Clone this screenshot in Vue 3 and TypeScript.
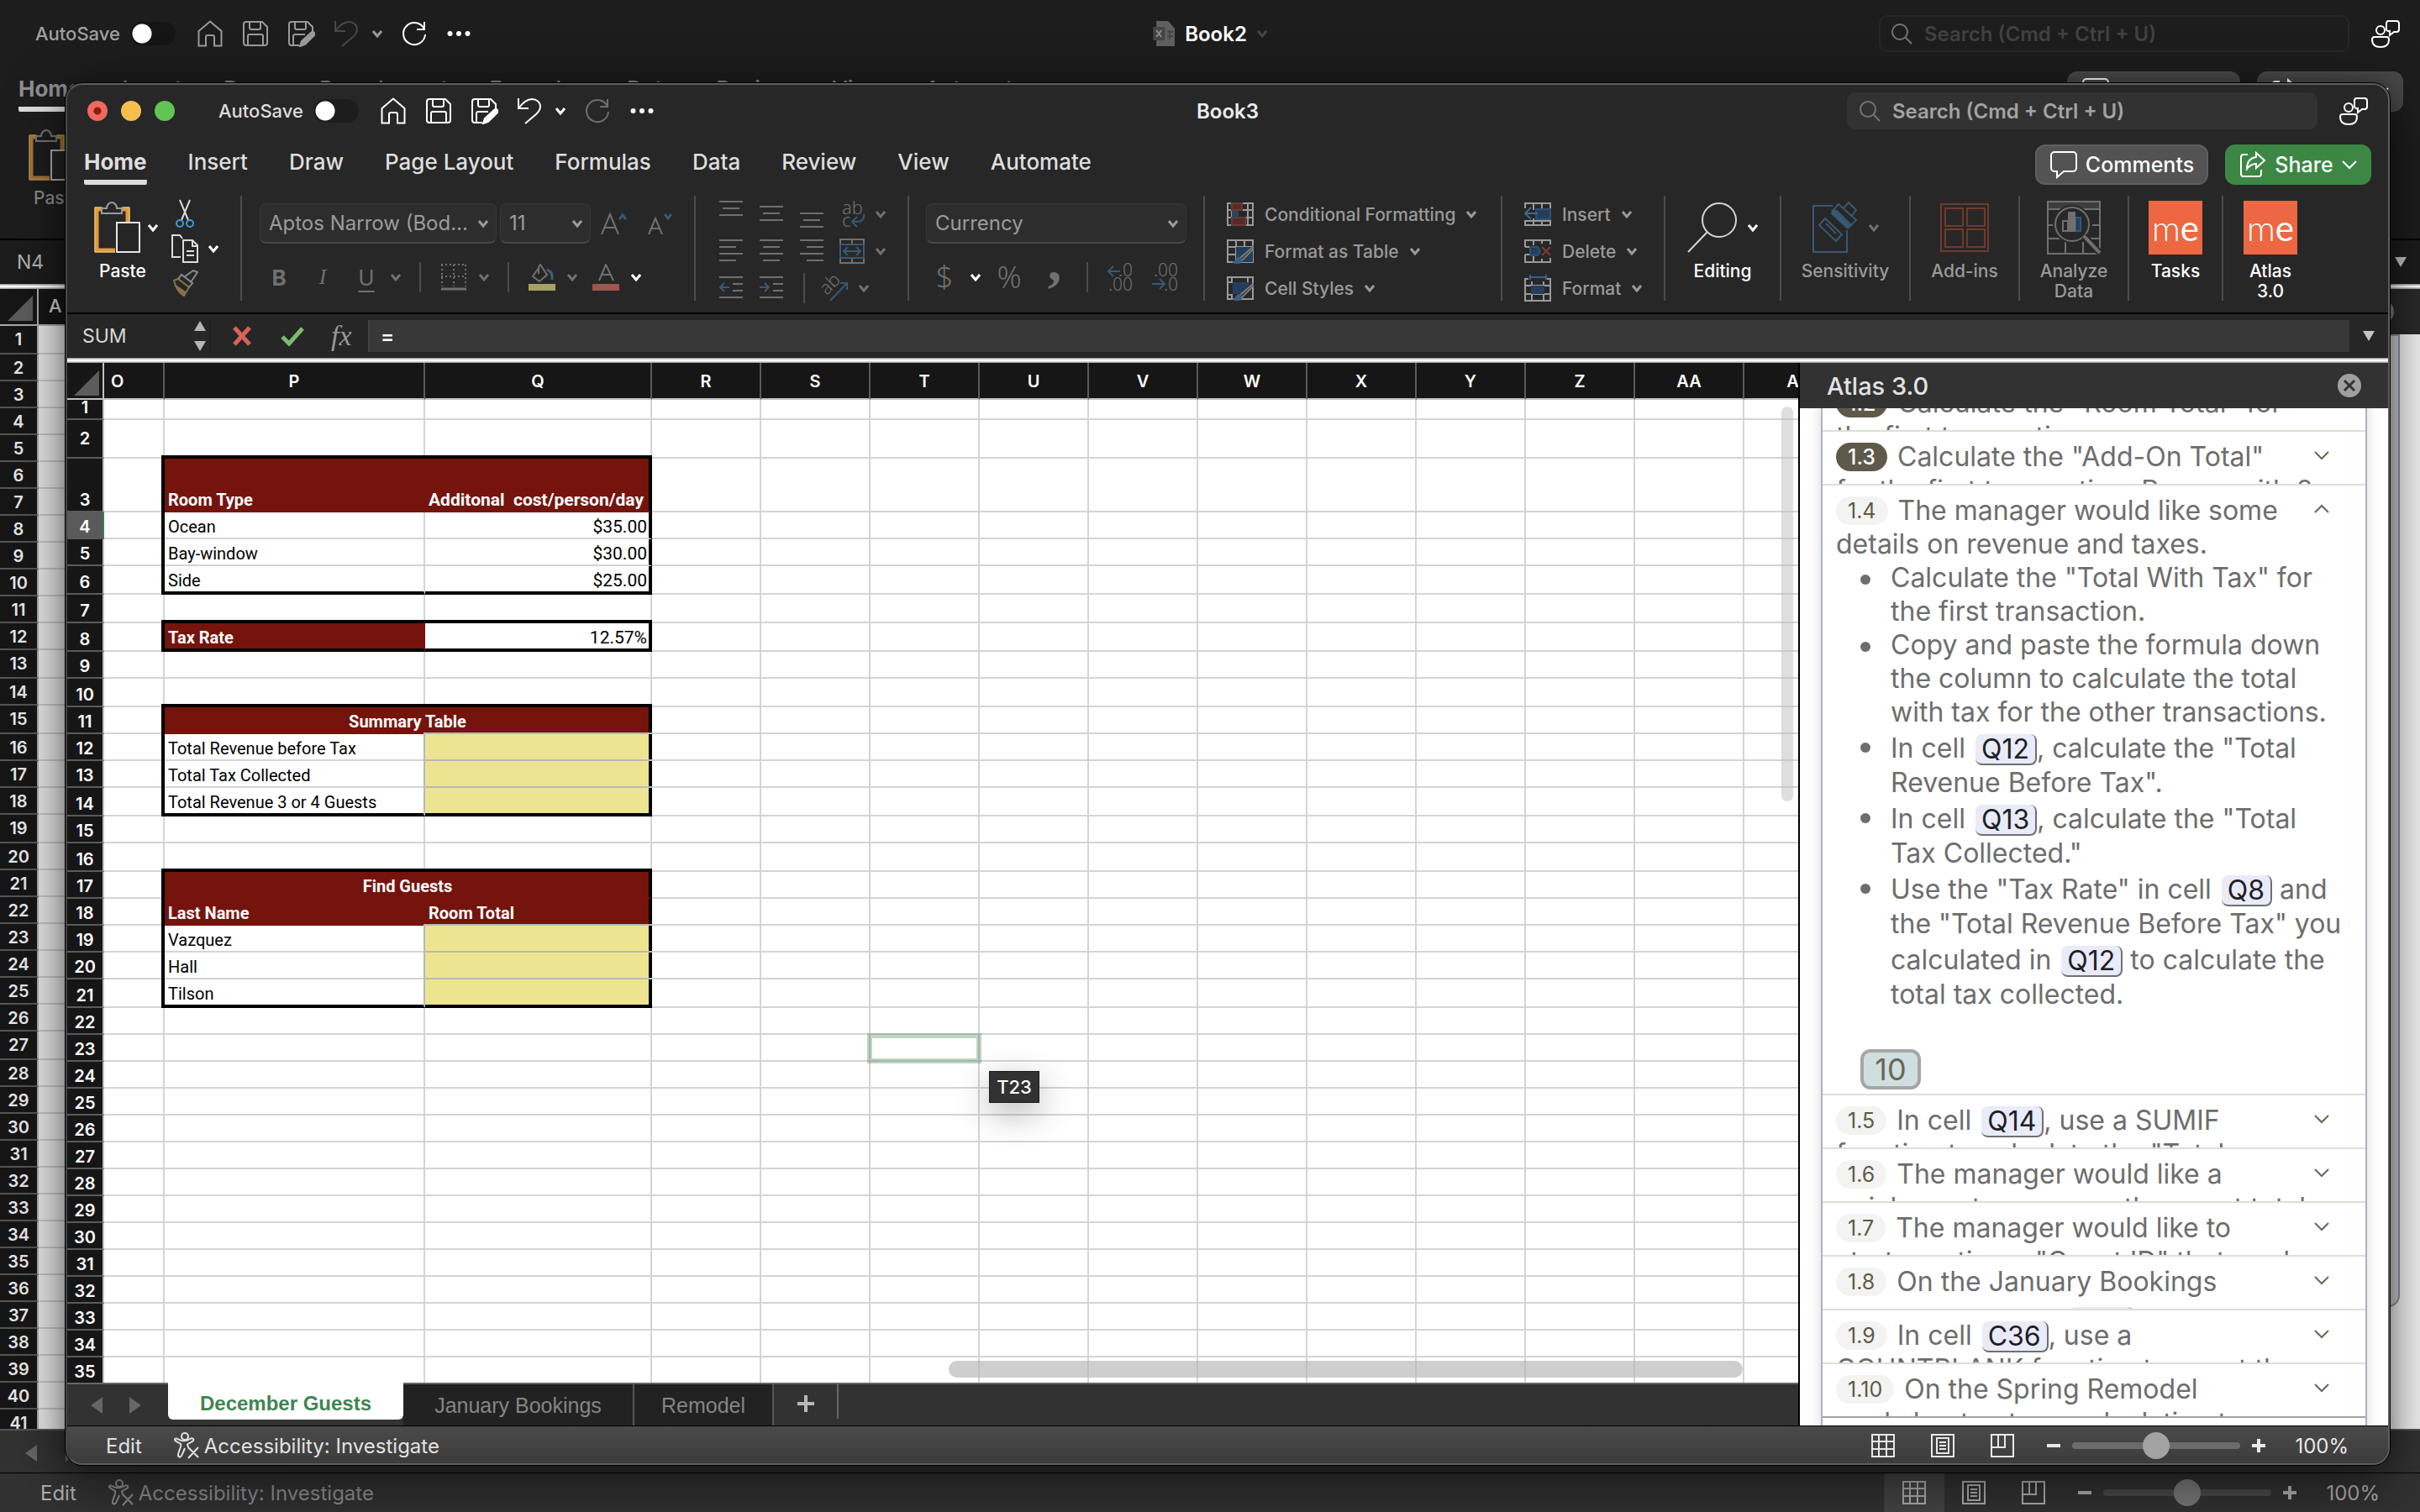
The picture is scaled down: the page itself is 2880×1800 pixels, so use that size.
<script setup lang="ts">
import { ref } from 'vue'

interface Cell {
  text?: string
  cls?: string
  span?: number
  tip?: string
}
interface Row {
  n: number
  h: number
  cells: Cell[]
}
interface Task {
  id: string
  done?: boolean
  open?: boolean
  lines: string[]
  bullets?: string[][]
  points?: string
}

const ribbonTabs = ['Home', 'Insert', 'Draw', 'Page Layout', 'Formulas', 'Data', 'Review', 'View', 'Automate']
const columns = ['O', 'P', 'Q', 'R', 'S', 'T', 'U', 'V', 'W', 'X', 'Y', 'Z', 'AA', 'AB']
const colClass = (c: string) => (c === 'O' ? 'c-o' : c === 'P' ? 'c-p' : c === 'Q' ? 'c-q' : 'c-n')

const filled: Record<number, Cell[]> = {
  3: [
    { text: 'Room Type', cls: 'head top left' },
    { text: 'Additonal  cost/person/day', cls: 'head top edge num' },
  ],
  4: [{ text: 'Ocean', cls: 'left' }, { text: '$35.00', cls: 'edge num' }],
  5: [{ text: 'Bay-window', cls: 'left' }, { text: '$30.00', cls: 'edge num' }],
  6: [{ text: 'Side', cls: 'left end' }, { text: '$25.00', cls: 'edge num end' }],
  8: [
    { text: 'Tax Rate', cls: 'head top left end' },
    { text: '12.57%', cls: 'top edge num end' },
  ],
  11: [{ text: 'Summary Table', cls: 'head top left edge mid', span: 2 }],
  12: [{ text: 'Total Revenue before Tax', cls: 'left' }, { cls: 'edge fill' }],
  13: [{ text: 'Total Tax Collected', cls: 'left' }, { cls: 'edge fill' }],
  14: [{ text: 'Total Revenue 3 or 4 Guests', cls: 'left end' }, { cls: 'edge fill end' }],
  17: [{ text: 'Find Guests', cls: 'head top left edge mid', span: 2 }],
  18: [{ text: 'Last Name', cls: 'head left' }, { text: 'Room Total', cls: 'head edge' }],
  19: [{ text: 'Vazquez', cls: 'left' }, { cls: 'edge fill' }],
  20: [{ text: 'Hall', cls: 'left' }, { cls: 'edge fill' }],
  21: [{ text: 'Tilson', cls: 'left end' }, { cls: 'edge fill end' }],
}
const tall: Record<number, number> = { 1: 34, 2: 46, 3: 64, 6: 34, 7: 34, 8: 34, 10: 34, 14: 34, 16: 34, 21: 34 }

const rows: Row[] = Array.from({ length: 35 }, (_, i) => {
  const n = i + 1
  const rest: Cell[] = columns.slice(3).map((c) => (n === 23 && c === 'T' ? { tip: 'T23', cls: 'target' } : {}))
  return { n, h: tall[n] ?? 32, cells: [{}, ...(filled[n] ?? [{}, {}]), ...rest] }
})
const backRows = Array.from({ length: 41 }, (_, i) => {
  const n = i + 1
  return { n, h: [1, 13, 15, 19, 27].includes(n) ? 34 : 32 }
})

const tasks: Task[] = [
  { id: '1.2', done: true, lines: ['Calculate the "Room Total" for', 'the first transaction.'] },
  { id: '1.3', done: true, lines: ['Calculate the "Add-On Total"', 'for the first transaction. Rooms with 2'] },
  {
    id: '1.4',
    open: true,
    lines: ['The manager would like some', 'details on revenue and taxes.'],
    bullets: [
      ['Calculate the "Total With Tax" for', 'the first transaction.'],
      ['Copy and paste the formula down', 'the column to calculate the total', 'with tax for the other transactions.'],
      ['In cell [Q12], calculate the "Total', 'Revenue Before Tax".'],
      ['In cell [Q13], calculate the "Total', 'Tax Collected."'],
      [
        'Use the "Tax Rate" in cell [Q8] and',
        'the "Total Revenue Before Tax" you',
        'calculated in [Q12] to calculate the',
        'total tax collected.',
      ],
    ],
    points: '10',
  },
  { id: '1.5', lines: ['In cell [Q14], use a SUMIF', 'function to calculate the "Total'] },
  { id: '1.6', lines: ['The manager would like a', 'quick way to compare the guest total'] },
  { id: '1.7', lines: ['The manager would like to', 'start creating a "Guest ID" that reads'] },
  { id: '1.8', lines: ['On the January Bookings', 'worksheet, in cell [C35], use a'] },
  { id: '1.9', lines: ['In cell [C36], use a', 'COUNTBLANK function to count the'] },
  { id: '1.10', lines: ['On the Spring Remodel', 'worksheet enter a calculation to'] },
]
const parts = (line: string) => line.split(/(\[[^\]]+\])/).filter((s) => s)
const isRef = (s: string) => s.startsWith('[')
const bare = (s: string) => s.replace(/[[\]]/g, '')

const formula = ref('=')
const cellName = ref('SUM')
const backName = ref('N4')
const zoom = ref(50)
</script>

<template>
  <svg class="sprite" aria-hidden="true">
    <symbol id="home" viewBox="0 0 30 32"><path d="M1.500 13 15 1.500 28.500 13V30.500H20V20a2 2 0 0 0-2-2h-6a2 2 0 0 0-2 2v10.500H1.500z" /></symbol>
    <symbol id="save" viewBox="0 0 30 32"><path d="M4 2h19l6 6v19a3 3 0 0 1-3 3H4a3 3 0 0 1-3-3V5a3 3 0 0 1 3-3zM8 2v7a2 2 0 0 0 2 2h9a2 2 0 0 0 2-2V2M6 30V19a2 2 0 0 1 2-2h14a2 2 0 0 1 2 2v11" /></symbol>
    <symbol id="save-edit" viewBox="0 0 32 32"><path d="M13 30H4a3 3 0 0 1-3-3V5a3 3 0 0 1 3-3h19l6 6v5M8 2v7a2 2 0 0 0 2 2h9a2 2 0 0 0 2-2V2M6 30V19a2 2 0 0 1 2-2h12" /><path d="M14 31l2-6 11-10a2 2 0 0 1 4 3L20 29z" fill="currentColor" /></symbol>
    <symbol id="undo" viewBox="0 0 30 32"><path d="M2 1v12h12M2 13C8 5 13 2 18 2c6 0 10 4 10 9 0 4-2 6-5 9L10 31" /></symbol>
    <symbol id="redo" viewBox="0 0 30 32"><path d="M27 2v9h-9M27 11A13 13 0 1 0 28 17" /></symbol>
    <symbol id="dots" viewBox="0 0 28 8"><g fill="currentColor" stroke="none"><circle cx="3.500" cy="4" r="3" /><circle cx="14" cy="4" r="3" /><circle cx="24.500" cy="4" r="3" /></g></symbol>
    <symbol id="chev" viewBox="0 0 12 10"><path d="M1 2l5 6 5-6" stroke-width="3" /></symbol>
    <symbol id="chev-thin" viewBox="0 0 18 12"><path d="M1 2l8 8 8-8" /></symbol>
    <symbol id="glass" viewBox="0 0 26 26"><circle cx="11" cy="11" r="9" /><path d="M18 18l7 7" /></symbol>
    <symbol id="people" viewBox="0 0 34 34"><path d="M20 2h10a3 3 0 0 1 3 3v7a3 3 0 0 1-3 3h-3l-5 4v-5a3 3 0 0 1-4-2V5a3 3 0 0 1 2-3z" /><circle cx="11" cy="13" r="5" /><path d="M4 21h14a3 3 0 0 1 3 3c0 6-4 9-10 9S1 30 1 24a3 3 0 0 1 3-3z" /></symbol>
    <symbol id="paste" viewBox="0 0 56 62">
      <path d="M9 9H3v49h22M34 9h6v18" stroke="#e09a3e" stroke-width="5" /><path d="M10 7H1v53h24M33 7h9v20" stroke="#f5d48a" stroke-width="1" />
      <path d="M9 14V8h6c0-4 3-7 6-7s6 3 6 7h6v6z" stroke="#9a9a9a" /><path d="M27 25h27v35H27z" fill="#262626" stroke="#e6e6e6" />
    </symbol>
    <symbol id="cut" viewBox="0 0 24 34"><path d="M6 1l10 24M18 1L8 25" stroke="#dcdcdc" /><circle cx="6" cy="29" r="4" stroke="#4a95d8" /><circle cx="18" cy="29" r="4" stroke="#4a95d8" /></symbol>
    <symbol id="copy" viewBox="0 0 32 34"><path d="M11 27H1V1h9l3 4M14 7h11l6 6v20H14zM25 7v7h6M18 20h9M18 25h9" /></symbol>
    <symbol id="brush" viewBox="0 0 32 32"><path d="M3 13l5-2 13 10-6 10C9 28 5 21 3 13z" stroke="#857348" /><path d="M8 11l4-5 13 10-4 5M15 9L26 1l5 2-8 12" stroke="#8a8a8a" /><path d="M5 18l12 8-2 5c-5-2-8-6-10-13z" fill="#857348" stroke="none" /></symbol>
    <symbol id="a-up" viewBox="0 0 32 28"><path d="M1 27L11 3l10 24M5 19h12" /><path d="M22 9l4-5 4 5" stroke="#3a5872" stroke-width="3" /></symbol>
    <symbol id="a-down" viewBox="0 0 32 28"><path d="M1 27L9 8l8 19M4 20h10" /><path d="M20 3l4 5 4-5" stroke="#3a5872" stroke-width="3" /></symbol>
    <symbol id="borders" viewBox="0 0 32 32"><path d="M1 1h30M1 15h30M2 1v26M16 1v26M30 1v26" stroke-dasharray="2 3" /><path d="M1 30h30" stroke-width="3" /></symbol>
    <symbol id="bucket" viewBox="0 0 32 32"><path d="M12 5L5 15l8 6 9-8L14 1l-2 3v8" /><path d="M22 7c5 2 7 6 6 12" stroke="#3f5f7c" stroke-width="3" /><path d="M0 24h32v8H0z" fill="#a5a265" stroke="none" /></symbol>
    <symbol id="a-color" viewBox="0 0 32 32"><path d="M8 20L16 1l9 19M11 13h11" /><path d="M0 24h32v8H0z" fill="#9e5650" stroke="none" /></symbol>
    <symbol id="v-top" viewBox="0 0 28 32"><path d="M0 1h28M4 9h20M0 17h28" /></symbol>
    <symbol id="v-mid" viewBox="0 0 28 32"><path d="M0 7h28M4 15h20M0 23h28" /></symbol>
    <symbol id="v-bot" viewBox="0 0 28 32"><path d="M0 15h28M4 23h20M0 31h28" /></symbol>
    <symbol id="h-left" viewBox="0 0 28 32"><path d="M0 3h28M0 11h20M0 19h28M0 27h20" /></symbol>
    <symbol id="h-mid" viewBox="0 0 28 32"><path d="M0 3h28M4 11h20M0 19h28M4 27h20" /></symbol>
    <symbol id="h-right" viewBox="0 0 28 32"><path d="M0 3h28M8 11h20M0 19h28M8 27h20" /></symbol>
    <symbol id="outdent" viewBox="0 0 28 32"><path d="M0 3h28M16 11h12M16 19h12M0 27h28" /><path d="M12 15H2M6 10l-5 5 5 5" stroke="#3a5872" /></symbol>
    <symbol id="indent" viewBox="0 0 28 32"><path d="M0 3h28M16 11h12M16 19h12M0 27h28" /><path d="M0 15h10M6 10l5 5-5 5" stroke="#3a5872" /></symbol>
    <symbol id="merge" viewBox="0 0 32 32"><path d="M2 2h28v28H2zM16 2v5M16 25v5" /><path d="M2 8h28v16H2z" fill="#282828" stroke="#3a5872" /><path d="M6 16h20M11 11l-5 5 5 5M21 11l5 5-5 5" stroke="#3a5872" /></symbol>
    <symbol id="cond" viewBox="0 0 32 28"><path d="M1 1h30v26H1zM1 9h30M1 18h30M6 1v26M25 1v26" /><path d="M6 1h12v8H6zM6 18h16v9H6z" fill="#572b2a" stroke="#6e3734" /><path d="M6 10h8v8H6z" fill="#2b4560" stroke="none" /></symbol>
    <symbol id="fmt-table" viewBox="0 0 32 32"><path d="M1 3h30v26H1zM1 11h30M1 20h12M11 3v26M21 3v8" /><path d="M11 11h20v18H11z" fill="#233f5d" stroke="none" /><path d="M31 11L15 25l3 2L31 14z" fill="#282828" stroke="#7a7a7a" /><path d="M6 29c5 0 4-6 9-6 4 0 5 8-1 8-4 0-6 0-8-2z" fill="#3c6080" stroke="none" /></symbol>
    <symbol id="cell-styles" viewBox="0 0 32 32"><path d="M1 3h30v26H1zM1 9h6M6 3v6M1 24h6M6 24v5M25 3v6" /><path d="M7 9h22L18 22 7 24z" fill="#233f5d" stroke="none" /><path d="M31 11L15 25l3 2L31 14z" fill="#282828" stroke="#7a7a7a" /><path d="M6 29c5 0 4-6 9-6 4 0 5 8-1 8-4 0-6 0-8-2z" fill="#3c6080" stroke="none" /></symbol>
    <symbol id="ins" viewBox="0 0 32 28"><path d="M1 7V1h30v26H1v-6M11 1v8M21 1v8M11 19v8M21 19v8M1 22h30" /><path d="M14 8h17v12H14z" fill="#233f5d" stroke="#2f5070" /><path d="M16 13H2M8 6l-7 7 7 7" stroke="#3f6890" /></symbol>
    <symbol id="del" viewBox="0 0 32 28"><path d="M1 9V1h30v5M1 9h8M1 18h8M1 18v9h30v-5M11 1v6M11 20v7M21 1v4M21 23v4" /><path d="M7 9h9l3 5-3 5H7z" fill="#233f5d" stroke="#2f5070" /><path d="M21 9l10 10M31 9L21 19" stroke="#7d3a37" /></symbol>
    <symbol id="fmt" viewBox="0 0 32 32"><path d="M5 5H1v26h30V5h-4M1 13h30M1 23h30M9 8v23M23 8v23" /><path d="M8 13h16v10H8z" fill="#233f5d" stroke="none" /><path d="M7 3h19M7 0v6M26 0v6" stroke="#3a6288" /></symbol>
    <symbol id="find" viewBox="0 0 60 60"><circle cx="38" cy="21" r="20" /><path d="M24 35L1 59" /></symbol>
    <symbol id="sens" viewBox="0 0 56 62"><path d="M25 5H2v55h40V34" /><path d="M16 20l-7 8 20 19 7-8zM17 26l12 12" stroke-width="2" /><path d="M32 3l-7 8 20 19 8-8zM38 8l6-7 9 9-6 8M25 11l5 0 17 17-3 3z" /><path d="M26 10l18 18-2 3-18-17z" fill="currentColor" /></symbol>
    <symbol id="addins" viewBox="0 0 60 60"><path d="M2 2h56v56H2zM7 7h21v21H7zM33 7h21v21H33zM7 32h21v21H7zM33 32h21v21H33z" /></symbol>
    <symbol id="analyze" viewBox="0 0 64 64"><path d="M1 1h62v9H1z" fill="#3d3d3d" /><path d="M1 1h62v62H1zM1 29h8M54 29h9M1 45h15M52 45h11M22 49v14M43 49v14" /><circle cx="30" cy="28" r="23" fill="#282828" stroke="none" /><path d="M19 24h6v12h-6z" /><path d="M34 20h6v16h-6z" fill="#233f5d" stroke="#34587c" /><path d="M26 14h7v22h-7z" fill="currentColor" /><circle cx="30" cy="28" r="20" /><path d="M44 42l20 21" stroke="#282828" stroke-width="8" /><path d="M44 42l19 20" stroke-width="4" /></symbol>
    <symbol id="bubble" viewBox="0 0 34 34"><path d="M6 2h22a4 4 0 0 1 4 4v15a4 4 0 0 1-4 4H17l-8 7v-7H6a4 4 0 0 1-4-4V6a4 4 0 0 1 4-4z" /></symbol>
    <symbol id="share" viewBox="0 0 32 32"><path d="M10 4H5a3 3 0 0 0-3 3v20a3 3 0 0 0 3 3h18a3 3 0 0 0 3-3v-5" /><path d="M20 2l10 9-10 9v-5c-5 0-8 2-11 6 0-8 4-13 11-14z" /></symbol>
    <symbol id="x-mark" viewBox="0 0 24 24"><path d="M3 2l18 20M21 2L3 22" stroke-width="5" /></symbol>
    <symbol id="tick" viewBox="0 0 28 24"><path d="M2 13l8 8L26 3" stroke-width="5" /></symbol>
    <symbol id="access" viewBox="0 0 32 32"><circle cx="14" cy="5" r="4" /><path d="M2 8c2-2 4 1 8 2s7 0 10-2 5 0 4 2-7 3-7 5l2 5M2 8c-1 3 5 4 7 6s-4 11-3 14 4 1 5-2l3-7M19 19l11 11M30 18L18 31" /></symbol>
    <symbol id="v-grid" viewBox="0 0 28 28"><path d="M1 1h26v26H1zM1 9h26M1 18h26M9 1v26M18 1v26" /></symbol>
    <symbol id="v-page" viewBox="0 0 28 28"><path d="M1 1h26v26H1zM7 5h14v18H7zM10 10h8M10 14h8M10 18h8" /></symbol>
    <symbol id="v-break" viewBox="0 0 28 28"><path d="M1 1h26v26H1zM1 16h16V1M9 1v15" /></symbol>
    <symbol id="corner" viewBox="0 0 30 30"><path d="M30 0v30H0z" fill="#5c5c5c" stroke="none" /></symbol>
  </svg>

  <main class="desk">
    <section class="back" aria-label="Book2">
      <header class="bar">
        <div class="quick">
          <label class="auto">AutoSave <input type="checkbox" class="toggle" /></label>
          <svg class="i30"><use href="#home" /></svg><svg class="i30"><use href="#save" /></svg><svg class="i32"><use href="#save-edit" /></svg>
          <span class="pair"><svg class="i30 faint"><use href="#undo" /></svg><svg class="chev"><use href="#chev" /></svg></span>
          <svg class="i30 white"><use href="#redo" /></svg><svg class="dots white"><use href="#dots" /></svg>
        </div>
        <h1 class="doc"><svg class="file" viewBox="0 0 26 30"><path d="M4 0h14l8 9v21H4z" fill="#5f5f5f" stroke="none" /><path d="M0 7h14v16H0z" fill="#454545" stroke="none" /><path d="M4 11l6 8M10 11l-6 8" stroke="#8c8c8c" /><path d="M17 13h7M17 18h7M20 11v11" stroke="#454545" /></svg>Book2<svg class="chev faint"><use href="#chev" /></svg></h1>
        <div class="tools">
          <label class="search"><svg class="i26"><use href="#glass" /></svg><input type="text" placeholder="Search (Cmd + Ctrl + U)" aria-label="Search" /></label>
          <svg class="i34 white"><use href="#people" /></svg>
        </div>
      </header>
      <nav class="tabs">
        <div class="tablist"><button v-for="t in ribbonTabs" :key="t" :class="{ on: t === 'Home' }">{{ t }}</button></div>
        <div class="acts">
          <button class="btn grey"><svg class="i34"><use href="#bubble" /></svg>Comments</button>
          <button class="btn grey share-btn"><svg class="i32"><use href="#share" /></svg>Share<svg class="ct"><use href="#chev-thin" /></svg></button>
        </div>
      </nav>
      <div class="back-ribbon"><button class="big"><svg class="i-paste"><use href="#paste" /></svg><span>Paste</span></button></div>
      <div class="fbar"><input v-model="backName" class="namebox" aria-label="Cell name" /><span class="tri-down"></span></div>
      <div class="back-sheet">
        <div class="back-grid">
          <div class="back-head"><span class="cornercell"><svg><use href="#corner" /></svg></span><span class="a">A</span></div>
          <div v-for="r in backRows" :key="r.n" class="back-row" :style="{ height: r.h + 'px' }"><b>{{ r.n }}</b><i></i></div>
        </div>
        <div class="back-pane"><div class="pane-bar"><span class="pane-close"></span></div><div class="back-card"></div></div>
      </div>
      <div class="back-tabs"><span class="arr l"></span><span class="arr r"></span><span class="sheet-on"></span></div>
      <footer class="status">
        <span class="mode">Edit</span>
        <button class="acc"><svg class="i32"><use href="#access" /></svg>Accessibility: Investigate</button>
        <div class="views">
          <svg class="i28 sel"><use href="#v-grid" /></svg><svg class="i28"><use href="#v-page" /></svg><svg class="i28"><use href="#v-break" /></svg>
          <span class="zoomer"><i class="minus"></i><input type="range" min="0" max="100" value="50" aria-label="Zoom" /><i class="minus plus"></i></span><span>100%</span>
        </div>
      </footer>
    </section>

    <section class="win" aria-label="Book3">
      <header class="bar">
        <div class="lights"><i class="red"></i><i class="amber"></i><i class="green"></i></div>
        <div class="quick">
          <label class="auto">AutoSave <input type="checkbox" class="toggle" /></label>
          <svg class="i30"><use href="#home" /></svg><svg class="i30"><use href="#save" /></svg><svg class="i32"><use href="#save-edit" /></svg>
          <span class="pair"><svg class="i30"><use href="#undo" /></svg><svg class="chev"><use href="#chev" /></svg></span>
          <svg class="i30 faint"><use href="#redo" /></svg><svg class="dots"><use href="#dots" /></svg>
        </div>
        <h1 class="doc">Book3</h1>
        <div class="tools">
          <label class="search"><svg class="i26"><use href="#glass" /></svg><input type="text" placeholder="Search (Cmd + Ctrl + U)" aria-label="Search" /></label>
          <svg class="i34"><use href="#people" /></svg>
        </div>
      </header>
      <nav class="tabs">
        <div class="tablist"><button v-for="t in ribbonTabs" :key="t" :class="{ on: t === 'Home' }">{{ t }}</button></div>
        <div class="acts">
          <button class="btn grey"><svg class="i34"><use href="#bubble" /></svg>Comments</button>
          <button class="btn green-btn share-btn"><svg class="i32"><use href="#share" /></svg>Share<svg class="ct"><use href="#chev-thin" /></svg></button>
        </div>
      </nav>

      <div class="ribbon">
        <div class="grp g-clip">
          <button class="big"><span class="icrow"><svg class="i-paste"><use href="#paste" /></svg><svg class="chev"><use href="#chev" /></svg></span><span>Paste</span></button>
          <div class="stack">
            <button aria-label="Cut"><svg class="i-cut"><use href="#cut" /></svg></button>
            <button aria-label="Copy"><svg class="i-copy"><use href="#copy" /></svg><svg class="chev"><use href="#chev" /></svg></button>
            <button aria-label="Format Painter"><svg class="i32"><use href="#brush" /></svg></button>
          </div>
        </div>
        <div class="grp g-font dim">
          <div class="line sel-line">
            <span class="sel w-font"><select aria-label="Font"><option>Aptos Narrow (Bod...</option></select><svg class="chev"><use href="#chev" /></svg></span>
            <span class="sel w-size"><select aria-label="Font size"><option>11</option></select><svg class="chev"><use href="#chev" /></svg></span>
            <svg class="i-a"><use href="#a-up" /></svg><svg class="i-a second"><use href="#a-down" /></svg>
          </div>
          <div class="line fmt-line">
            <b class="glyph">B</b><i class="glyph it">I</i><u class="glyph">U</u><svg class="chev"><use href="#chev" /></svg>
            <span class="sep"></span><svg class="i32"><use href="#borders" /></svg><svg class="chev"><use href="#chev" /></svg><span class="sep"></span>
            <svg class="i32"><use href="#bucket" /></svg><svg class="chev wide"><use href="#chev" /></svg><svg class="i32"><use href="#a-color" /></svg><svg class="chev lit"><use href="#chev" /></svg>
          </div>
        </div>
        <div class="grp g-align dim">
          <div class="al"><svg class="i28w"><use href="#v-top" /></svg><svg class="i28w"><use href="#v-mid" /></svg><svg class="i28w"><use href="#v-bot" /></svg><span class="tail">
            <svg class="i32t ic" viewBox="0 0 32 34"><text x="4" y="17" font-size="22">ab</text><text x="4" y="32" font-size="22">c</text><path d="M30 17c1 6-3 9-8 9h-5M22 20l-6 6 6 6" stroke="#3a5872" /></svg><svg class="chev"><use href="#chev" /></svg></span></div>
          <div class="al"><svg class="i28w"><use href="#h-left" /></svg><svg class="i28w"><use href="#h-mid" /></svg><svg class="i28w"><use href="#h-right" /></svg><span class="tail"><svg class="i32"><use href="#merge" /></svg><svg class="chev"><use href="#chev" /></svg></span></div>
          <div class="al"><svg class="i28w"><use href="#outdent" /></svg><svg class="i28w"><use href="#indent" /></svg><span class="sep near"></span><span class="tail">
            <svg class="i34 ic" viewBox="0 0 34 34"><text x="8" y="26" font-size="22" transform="rotate(-45 8 26)">ab</text><path d="M12 32l20-21M24 11h8v8" stroke="#3a5872" /></svg><svg class="chev"><use href="#chev" /></svg></span></div>
        </div>
        <div class="grp g-num dim">
          <div class="line sel-line"><span class="sel w-num"><select aria-label="Number format"><option>Currency</option></select><svg class="chev"><use href="#chev" /></svg></span></div>
          <div class="line num-line"><span class="sym">$</span><svg class="chev lit"><use href="#chev" /></svg><span class="sym pct">%</span><span class="sym comma">,</span><span class="sep"></span>
            <svg class="i32t ic" viewBox="0 0 32 34"><path d="M2 10h14M8 4l-6 6 6 6" stroke="#3a5872" /><text x="31" y="16" font-size="21" text-anchor="end">.0</text><text x="31" y="33" font-size="21" text-anchor="end">.00</text></svg>
            <svg class="i32t ic" viewBox="0 0 32 34"><path d="M0 25h15M9 19l6 6-6 6" stroke="#3a5872" /><text x="31" y="16" font-size="21" text-anchor="end">.00</text><text x="31" y="33" font-size="21" text-anchor="end">.0</text></svg></div>
        </div>
        <div class="grp g-style dim">
          <button class="item"><svg class="i32"><use href="#cond" /></svg>Conditional Formatting<svg class="chev"><use href="#chev" /></svg></button>
          <button class="item"><svg class="i32"><use href="#fmt-table" /></svg>Format as Table<svg class="chev"><use href="#chev" /></svg></button>
          <button class="item"><svg class="i32"><use href="#cell-styles" /></svg>Cell Styles<svg class="chev"><use href="#chev" /></svg></button>
        </div>
        <div class="grp g-cells dim">
          <button class="item"><svg class="i32"><use href="#ins" /></svg>Insert<svg class="chev"><use href="#chev" /></svg></button>
          <button class="item"><svg class="i32"><use href="#del" /></svg>Delete<svg class="chev"><use href="#chev" /></svg></button>
          <button class="item"><svg class="i32"><use href="#fmt" /></svg>Format<svg class="chev"><use href="#chev" /></svg></button>
        </div>
        <div class="grp g-edit"><button class="big"><span class="icrow"><svg class="i60 soft"><use href="#find" /></svg><svg class="chev"><use href="#chev" /></svg></span><span>Editing</span></button></div>
        <div class="grp g-sens dim"><button class="big"><span class="icrow"><svg class="i-sens"><use href="#sens" /></svg><svg class="chev"><use href="#chev" /></svg></span><span>Sensitivity</span></button></div>
        <div class="grp g-add dim"><button class="big"><span class="icrow"><svg class="i60 rust"><use href="#addins" /></svg></span><span>Add-ins</span></button></div>
        <div class="grp g-add dim"><button class="big"><span class="icrow"><svg class="i64"><use href="#analyze" /></svg></span><span>Analyze<br />Data</span></button></div>
        <div class="grp g-me"><button class="big"><span class="icrow me"><em>m</em>e</span><span>Tasks</span></button></div>
        <div class="grp g-me last"><button class="big"><span class="icrow me"><em>m</em>e</span><span>Atlas<br />3.0</span></button></div>
      </div>

      <div class="fbar">
        <input v-model="cellName" class="namebox" aria-label="Cell name" /><span class="spin"><i class="up"></i><i class="down"></i></span>
        <button class="fb x" aria-label="Cancel"><svg class="i24"><use href="#x-mark" /></svg></button>
        <button class="fb ok" aria-label="Enter"><svg class="i28t"><use href="#tick" /></svg></button>
        <span class="fx">fx</span>
        <input v-model="formula" class="formula" aria-label="Formula" /><span class="tri-down"></span>
      </div>

      <div class="work">
        <div class="left-col">
          <div class="clip">
            <table class="heads">
              <thead><tr><th class="c-h"><svg><use href="#corner" /></svg></th><th v-for="c in columns" :key="c" :class="colClass(c)">{{ c }}</th></tr></thead>
            </table>
            <div class="cells">
              <table>
                <colgroup><col class="c-h" /><col v-for="c in columns" :key="c" :class="colClass(c)" /></colgroup>
                <tbody>
                  <tr v-for="r in rows" :key="r.n" :style="{ height: r.h + 'px' }">
                    <th :class="{ cur: r.n === 4, mid: r.n === 2 }">{{ r.n }}</th>
                    <td v-for="(c, i) in r.cells" :key="i" :class="c.cls" :colspan="c.span ?? 1">{{ c.text }}<template v-if="c.tip"><span class="outline"></span><span class="tip">{{ c.tip }}</span></template></td>
                  </tr>
                </tbody>
              </table>
            </div>
            <span class="vscroll"></span><span class="hscroll"></span>
          </div>
          <div class="sheets">
            <div class="arrows"><span class="arr l"></span><span class="arr r"></span></div>
            <button class="on">December Guests</button>
            <button class="jan">January Bookings</button>
            <button class="rem">Remodel</button>
            <button class="add" aria-label="New sheet"><i class="minus plus"></i></button>
          </div>
        </div>
        <aside class="panel">
          <header><h2>Atlas 3.0</h2><button class="close" aria-label="Close"><svg viewBox="0 0 28 28"><path d="M8 8l12 12M20 8L8 20" stroke-width="3" /></svg></button></header>
          <div class="scroll">
            <div class="card">
              <article v-for="t in tasks" :key="t.id" :class="{ open: t.open }">
                <svg class="toggle-chev" :class="{ flip: t.open }"><use href="#chev-thin" /></svg>
                <p v-for="(l, i) in t.lines" :key="i" :class="{ low: i > 0 && l.includes('[') }"><span v-if="i === 0" class="pill" :class="{ done: t.done }">{{ t.id }}</span><template v-for="(s, j) in parts(l)" :key="j"><kbd v-if="isRef(s)">{{ bare(s) }}</kbd><template v-else>{{ s }}</template></template></p>
                <ul v-if="t.bullets">
                  <li v-for="(b, k) in t.bullets" :key="k"><p v-for="(l, i) in b" :key="i" :class="{ ref: l.includes('[') }"><template v-for="(s, j) in parts(l)" :key="j"><kbd v-if="isRef(s)">{{ bare(s) }}</kbd><template v-else>{{ s }}</template></template></p></li>
                </ul>
                <span v-if="t.points" class="points">{{ t.points }}</span>
              </article>
            </div>
          </div>
        </aside>
      </div>

      <footer class="status">
        <span class="mode">Edit</span>
        <button class="acc"><svg class="i32"><use href="#access" /></svg>Accessibility: Investigate</button>
        <div class="views">
          <svg class="i28"><use href="#v-grid" /></svg><svg class="i28"><use href="#v-page" /></svg><svg class="i28"><use href="#v-break" /></svg>
          <span class="zoomer"><i class="minus"></i><input v-model="zoom" type="range" min="0" max="100" aria-label="Zoom" /><i class="minus plus"></i></span><span>100%</span>
        </div>
      </footer>
    </section>
  </main>
</template>

<style>
body { margin: 0; background: #1b1b1b; }
</style>

<style scoped>
* { box-sizing: border-box; }
.sprite { position: absolute; width: 0; height: 0; }
svg { display: block; flex: none; fill: none; stroke: currentColor; stroke-width: 2; }
.ic text { font-family: "Noto Sans", sans-serif; font-weight: 300; fill: #707070; stroke: none; }
button, input, select { font: inherit; color: inherit; background: none; border: 0; padding: 0; margin: 0; }
h1, h2, p, ul { margin: 0; padding: 0; }
.desk { position: relative; height: 100vh; min-height: 1000px; overflow: hidden; font-family: Inter, "Noto Sans", sans-serif; font-size: 22px; color: #fff; }
.i24 { width: 24px; height: 24px; }
.i26 { width: 26px; height: 26px; }
.i28 { width: 28px; height: 28px; }
.i28t { width: 28px; height: 24px; }
.i28w { width: 28px; height: 32px; }
.i30 { width: 30px; height: 32px; }
.i32 { width: 32px; height: 32px; }
.i32t { width: 32px; height: 34px; }
.i34 { width: 34px; height: 34px; }
.i60 { width: 60px; height: 60px; }
.i64 { width: 64px; height: 64px; }
.chev { width: 12px; height: 10px; }
.ct { width: 18px; height: 12px; }
.dots { width: 28px; height: 8px; }

/* Windows */
.win { position: absolute; inset: 99px 36px 56px 78px; display: flex; flex-direction: column; background: #272727; border: 2px solid #5e5e5e; border-left-color: #454545; border-radius: 20px; box-shadow: 0 0 0 1px #000, 0 24px 70px rgba(0, 0, 0, .5), 0 0 24px rgba(0, 0, 0, .3); overflow: hidden; }
.back { display: flex; flex-direction: column; height: 100%; background: #1d1d1d; color: #9a9a9a; }

/* Title bar */
.bar { display: grid; grid-template-columns: auto 1fr auto; align-items: center; height: 62px; position: relative; flex: none; }
.win .bar { padding: 0 24px; grid-template-columns: auto auto 1fr; }
.back .bar { height: 80px; padding: 0 24px 0 42px; }
.lights { display: flex; gap: 16px; }
.lights i { width: 24px; height: 24px; border-radius: 50%; }
.red { background: radial-gradient(circle, #8c1a10 0 4px, #ed6a5e 5px); }
.amber { background: #f5bf4f; }
.green { background: #61c554; }
.quick { display: flex; align-items: center; gap: 24px; }
.win .quick { margin-left: 52px; }
.auto { display: flex; align-items: center; gap: 12px; font-weight: 500; color: #dcdcdc; margin-right: 2px; }
.back .auto { color: #a0a0a0; }
.toggle { appearance: none; width: 54px; height: 28px; border-radius: 14px; background: radial-gradient(circle at 14px 14px, #fff 11px, transparent 12px), #1d1d1d; }
.back .toggle { background: radial-gradient(circle at 14px 14px, #fff 11px, transparent 12px), #151515; }
.pair { display: flex; align-items: center; gap: 16px; margin: 0 -1px 0 -2px; }
.faint { color: #6f6f6f; }
.back .faint { color: #484848; }
.white { color: #fff; }
.doc { position: absolute; left: 50%; transform: translateX(-50%); display: flex; align-items: center; gap: 12px; font-size: 24px; font-weight: 600; color: #fff; }
.win .doc { color: #ececec; }
.file { width: 26px; height: 30px; stroke-width: 2; }
.tools { grid-column: 3; display: flex; align-items: center; gap: 26px; justify-self: end; }
.search { width: 560px; height: 44px; border-radius: 10px; background: #323232; display: flex; align-items: center; gap: 14px; padding: 0 14px; color: #757575; }
.back .search { background: none; border: 2px solid #272727; padding: 0 12px; }
.search input { flex: 1; outline: 0; font-size: 24px; font-weight: 600; }
.search input::placeholder { color: #a3a3a3; opacity: 1; }
.back .search input::placeholder { color: #414141; }

/* Ribbon tabs */
.tabs { display: flex; justify-content: space-between; align-items: center; height: 60px; padding: 0 20px; flex: none; }
.back .tabs { padding: 0 20px 0 22px; height: 52px; }
.tablist { display: flex; gap: 49px; }
.tabs .tablist button { height: 54px; font-size: 26px; font-weight: 500; color: #dedede; border-bottom: 6px solid transparent; padding-top: 4px; white-space: nowrap; }
.tabs .tablist .on { font-weight: 700; background: linear-gradient(#dedede, #dedede) bottom / 100% 6px no-repeat border-box; border-radius: 2px; }
.back .tabs .tablist button { color: #8f8f8f; }
.acts { display: flex; gap: 20px; margin-top: 6px; }
.btn { width: 206px; height: 48px; border-radius: 12px; display: flex; align-items: center; justify-content: center; gap: 9px; font-size: 25px; font-weight: 500; color: #fff; }
.share-btn { width: 174px; gap: 10px; }
.grey { background: #535353; border: 2px solid #5f5f5f; }
.green-btn { background: #3c8744; }
.back .grey { background: #484848; border-color: #4a4a4a; }

/* Ribbon */
.ribbon { display: flex; height: 151px; padding: 10px 0 16px; border-bottom: 2px solid #000; flex: none; }
.grp { position: relative; border-right: 2px solid #4c4c4c; flex: none; height: 125px; }
.grp.last { border: 0; }
.dim { color: #707070; }
.g-clip { width: 208px; display: flex; padding-left: 32px; }
.g-font { width: 540px; padding-left: 21px; }
.g-align { width: 254px; padding-left: 28px; }
.g-num { width: 352px; padding-left: 20px; }
.g-style { width: 354px; padding-left: 26px; }
.g-cells { width: 194px; padding-left: 26px; }
.g-edit { width: 138px; }
.g-sens { width: 154px; }
.g-add { width: 130px; }
.g-me { width: 112px; }
.big { width: 100%; display: flex; flex-direction: column; align-items: center; padding-top: 6px; line-height: 24px; font-weight: 500; font-size: 21px; }
.big > span:last-child { margin-top: 8px; white-space: nowrap; }
.dim .big > span:last-child, .dim .item { color: #9a9a9a; }
.icrow { display: flex; align-items: center; justify-content: center; gap: 12px; height: 64px; }
.g-clip .big { width: 78px; align-items: flex-start; }
.g-clip .big > span:last-child { margin-left: 6px; }
.i-paste { width: 56px; height: 62px; }
.g-clip .icrow { gap: 8px; }
.soft { color: #d4d4d4; }
.rust { color: #713a2b; }
.i-sens { width: 56px; height: 62px; color: #3a5872; }
.me { width: 64px; background: #ec6742; font: 400 42px/64px Lato, sans-serif; gap: 0; }
.me em { font-style: normal; font-weight: 300; }
.stack { display: flex; flex-direction: column; margin-left: 14px; }
.stack button { display: flex; align-items: center; height: 43px; gap: 12px; }
.i-cut { width: 24px; height: 34px; margin-left: 4px; }
.i-copy { width: 32px; height: 34px; color: #dcdcdc; }
.line { display: flex; align-items: center; }
.sel-line { height: 48px; margin-top: 9px; gap: 4px; color: #9c9c9c; }
.sel { position: relative; height: 48px; border: 1px solid #373737; border-bottom: 2px solid #484848; border-radius: 8px; background: #2d2d2d; }
.sel select { appearance: none; width: 100%; height: 100%; padding: 0 10px; font-size: 24px; }
.sel .chev { position: absolute; right: 9px; top: 18px; color: #9c9c9c; pointer-events: none; }
.w-font { width: 282px; }
.w-size { width: 108px; }
.w-num { width: 310px; }
.i-a { width: 32px; height: 28px; margin-left: 8px; color: #707070; }
.i-a.second { margin-left: 20px; }
.fmt-line, .num-line { height: 36px; margin-top: 22px; }
.fmt-line { padding-left: 8px; }
.fmt-line .chev { margin: 0 14px; }
.fmt-line .wide { margin-right: 18px; }
.fmt-line .glyph { width: 30px; text-align: center; font-size: 26px; margin-right: 22px; text-underline-offset: 6px; }
.fmt-line u.glyph { margin-right: 0; }
.fmt-line .glyph + .chev { margin-left: 14px; }
.it { font-family: "Liberation Serif", serif; }
.sep { width: 2px; height: 36px; background: #4c4c4c; flex: none; }
.fmt-line .sep { margin: 0 23px 0 8px; }
.lit { color: #fff; }
.al { display: flex; align-items: center; gap: 20px; height: 44px; }
.tail { display: flex; align-items: center; gap: 12px; margin-left: -2px; }
.near { margin: 0 0 0 4px; }
.num-line { padding-left: 12px; }
.sym { width: 20px; font: 300 36px/36px "Noto Sans", sans-serif; margin-right: 21px; display: flex; justify-content: center; }
.pct { width: 34px; margin: 0 28px 0 17px; }
.comma { width: 18px; font: 700 66px/20px "Liberation Serif", serif; height: 56px; margin-right: 29px; }
.num-line .i32t { margin-left: 22px; }
.item { display: flex; align-items: center; gap: 13px; height: 44px; font-size: 21px; font-weight: 500; white-space: nowrap; }

/* Formula bar */
.fbar { height: 58px; display: flex; align-items: center; flex: none; background: linear-gradient(#9e9e9e 0 1px, #fff 2px 4px, #a8a8a8 5px) bottom / 100% 6px no-repeat #262626; padding-bottom: 6px; }
.namebox { width: 151px; padding: 0 18px; font-size: 23px; color: #d8d8d8; outline: 0; }
.spin { width: 20px; display: flex; flex-direction: column; gap: 12px; border-right: 2px solid #1e1e1e; margin-right: 25px; }
.up { width: 0; height: 0; border: 7px solid transparent; border-top: 0; border-bottom: 12px solid #b5b5b5; }
.down { width: 0; height: 0; border: 7px solid transparent; border-bottom: 0; border-top: 12px solid #b5b5b5; }
.fb.x { color: #d7625c; margin-right: 34px; }
.fb.ok { color: #7dbb6c; margin-right: 32px; }
.fx { font: italic 34px/40px "Liberation Serif", serif; color: #989898; width: 44px; }
.formula { flex: 1; height: 38px; background: #383838; padding: 0 13px; font-size: 24px; font-weight: 600; outline: 0; border-left: 2px solid #444; }
.tri-down { width: 0; height: 0; border: 7px solid transparent; border-bottom: 0; border-top: 12px solid #c4c4c4; margin: 0 16px; }

/* Sheet */
.work { flex: 1; display: flex; min-height: 0; }
.left-col { flex: 1; min-width: 0; display: flex; flex-direction: column; }
.clip { position: relative; flex: 1; min-height: 0; overflow: hidden; background: #fff; display: flex; flex-direction: column; }
table { border-collapse: separate; border-spacing: 0; table-layout: fixed; width: 2126px; }
.c-h { width: 44px; }
.c-o { width: 72px; }
.c-p { width: 310px; }
.c-q { width: 270px; }
.c-n { width: 130px; }
.heads th { height: 44px; background: #161616; border-right: 2px solid #5a5a5a; border-bottom: 2px solid #c0c0c0; padding: 2px 0 0; font-size: 20px; font-weight: 600; }
.heads th.c-h { border-right-color: #c0c0c0; }
.heads svg { width: 30px; height: 30px; margin: 4px 0 0 8px; }
.heads th.c-o { text-align: left; padding-left: 8px; }
.cells { flex: 1; min-height: 0; overflow: hidden; }
.cells table { margin-top: -10px; }
.cells th { background: #161616; border-right: 2px solid #c0c0c0; border-bottom: 2px solid #5a5a5a; padding: 0; font-size: 20px; line-height: 26px; font-weight: 600; vertical-align: bottom; }
.cells th.mid { vertical-align: middle; }
.cells th.cur { background: #5a5a5a; border-right-color: #3b7d4f; }
td { border-right: 2px solid #d4d4d4; border-bottom: 2px solid #d4d4d4; padding: 0 2px 0 4px; color: #000; font: 400 20px/26px Roboto, sans-serif; vertical-align: bottom; white-space: pre; }
td.head { background: #74140d; color: #fff; font-weight: 700; border-color: #74140d; }
td.left { box-shadow: -4px 0 0 #000; }
td.top { box-shadow: 0 -4px 0 #000; }
td.left.top { box-shadow: -4px 0 0 #000, -4px -4px 0 #000, 0 -4px 0 #000; }
td.edge { border-right: 4px solid #000; }
td.end { border-bottom: 4px solid #000; }
td.num { text-align: right; font-size: 21px; }
td.head.num { padding-right: 6px; }
td.mid { text-align: center; }
td.fill { background: #ede492; border-bottom-color: #b9b9b9; box-shadow: -2px -2px 0 #b9b9b9, 0 -2px 0 #b9b9b9; }
td.fill.end { border-bottom-color: #000; }
td.target { position: relative; }
.outline { position: absolute; inset: -2px -4px -4px -4px; border: 6px solid rgba(72, 130, 92, .34); }
.tip { position: absolute; left: 141px; top: 43px; width: 60px; height: 38px; background: #323232; border: 1px solid #1c1c1c; color: #fff; font: 500 22px/36px Inter, sans-serif; text-align: center; box-shadow: 0 12px 40px rgba(0, 0, 0, .3); }
.vscroll { position: absolute; right: 6px; top: 52px; width: 14px; height: 470px; border-radius: 7px; background: rgba(190, 190, 190, .5); }
.hscroll { position: absolute; right: 66px; bottom: 6px; width: 945px; height: 20px; border-radius: 10px; background: rgba(180, 180, 180, .66); }
.sheets { height: 51px; background: #323232; display: flex; border-top: 2px solid #666; flex: none; font: 400 25px/46px "Liberation Sans", sans-serif; color: #858585; }
.arrows { width: 120px; display: flex; align-items: center; gap: 32px; padding-left: 28px; flex: none; }
.arr { width: 0; height: 0; border: 10px solid transparent; }
.arr.l { border-left: 0; border-right: 14px solid #666; }
.arr.r { border-right: 0; border-left: 14px solid #666; }
.sheets button { background: #222; flex: none; }
.sheets button.on { width: 280px; height: 44px; margin-top: -2px; padding-top: 6px; background: #fff; color: #3f8551; font-size: 24px; font-weight: 700; border-radius: 0 0 6px 6px; line-height: 38px; }
.sheets .jan { width: 275px; border-right: 2px solid #555; }
.sheets .rem { width: 166px; border-right: 2px solid #555; }
.sheets .add { width: 77px; background: none; border-right: 2px solid #666; height: 41px; display: grid; place-items: center; padding-top: 4px; color: #b8b8b8; }

/* Task panel */
.panel { width: 702px; border-left: 2px solid #000; background: #fff; display: flex; flex-direction: column; flex: none; }
.panel header { height: 54px; background: #323232; display: flex; align-items: center; justify-content: space-between; padding: 0 32px; flex: none; }
.panel h2 { font-size: 29px; font-weight: 500; color: #e2e2e2; }
.close { width: 28px; height: 28px; border-radius: 50%; background: #9f9f9f; color: #323232; }
.close svg { width: 28px; height: 28px; }
.scroll { flex: 1; min-height: 0; overflow: hidden; padding: 0 25px; color: #6d6d6d; }
.card { margin-top: -36px; min-height: 120%; border: solid #adb5bd; border-width: 0 2px; box-shadow: 0 0 16px rgba(0, 0, 0, .14); }
article { position: relative; height: 64px; overflow: hidden; border-bottom: 2px solid #deded8; padding: 10px 14px 0 16px; font-size: 32px; line-height: 40px; }
article:last-child { border-color: #a2a2a2; }
article.open { height: 726px; }
article p { white-space: nowrap; height: 40px; }
article ul { list-style: none; padding-left: 65px; }
article p.low { margin-top: 7px; }
li { position: relative; }
li::before { content: ""; position: absolute; left: -36px; top: 16px; width: 12px; height: 12px; border-radius: 50%; background: #6d6d6d; }
li p.ref { height: 44px; padding-top: 3px; }
.pill { display: inline-block; height: 34px; line-height: 34px; font-size: 25px; padding: 0 14px; border-radius: 17px; background: #f3f3f1; color: #5e5a48; margin-right: 12px; vertical-align: 2px; }
.pill.done { background: #5e594a; color: #fff; font-weight: 500; }
kbd { display: inline-block; font: inherit; height: 37px; line-height: 36px; padding: 0 7px; margin-left: 3px; border-radius: 8px; background: #e9ebfa; color: #202024; border: solid #707070; border-width: 0 2px 2px 0; vertical-align: bottom; }
.toggle-chev { position: absolute; right: 43px; top: 22px; width: 18px; height: 12px; color: #6a6655; }
.flip { transform: scaleY(-1); }
.points { position: absolute; left: 45px; bottom: 5px; width: 72px; height: 48px; border: 4px solid #a6a6a6; border-radius: 12px; background: #cfdfe0; color: #6a6655; font-size: 36px; line-height: 40px; text-align: center; }

/* Status bar */
.status { display: flex; align-items: center; height: 45px; background: linear-gradient(#4a4a4a, #3c3c3c); border-top: 1px solid #000; padding: 2px 47px 0 46px; flex: none; font-size: 24px; color: #e2e2e2; }
.back .status { background: #323232; color: #b4b4b4; height: 47px; padding: 0 48px; }
.acc { display: flex; align-items: center; gap: 5px; margin-left: 37px; }
.back .acc { color: #8f8f8f; }
.views { margin-left: auto; display: flex; align-items: center; gap: 43px; color: #e8e8e8; }
.back .views { color: #b0b0b0; }
.back .views .sel { position: static; background: #454545; border: 0; border-radius: 0; box-shadow: 0 0 0 22px #454545; clip-path: inset(-9px -22px); height: 28px; }
.zoomer { display: flex; align-items: center; gap: 14px; margin: 0 -8px 0 -4px; }
.minus { display: block; width: 16px; height: 4px; background: currentColor; position: relative; }
.plus::after { content: ""; position: absolute; left: 6px; top: -6px; width: 4px; height: 16px; background: currentColor; }
.add .minus { width: 20px; }
.add .plus::after { left: 8px; top: -8px; height: 20px; }
input[type="range"] { appearance: none; width: 200px; height: 8px; border-radius: 4px; background: #6c6c6c; }
.back input[type="range"] { background: #4a4a4a; }
input[type="range"]::-webkit-slider-thumb { appearance: none; width: 32px; height: 32px; border-radius: 50%; background: #a2a2a2; }
.back input[type="range"]::-webkit-slider-thumb { background: #7a7a7a; }

/* Rear window */
.back-ribbon { height: 154px; border-bottom: 2px solid #000; padding: 16px 0 0 34px; flex: none; overflow: hidden; }
.back-ribbon .big { width: 78px; align-items: flex-start; color: #8a8a8a; }
.back-ribbon .big span { margin-left: 6px; }
.back-ribbon svg { opacity: .7; }
.back .fbar { justify-content: space-between; background-color: #1c1c1c; }
.back .namebox { color: #b4b4b4; padding-left: 20px; }
.back-sheet { flex: 1; min-height: 0; display: flex; justify-content: space-between; background: #e6e6e6; overflow: hidden; }
.back-grid { width: 600px; }
.back-head { display: flex; height: 44px; background: #161616; border-bottom: 2px solid #aaa; font-weight: 500; color: #d0d0d0; }
.cornercell { width: 46px; border-right: 2px solid #aaa; }
.cornercell svg { width: 30px; height: 30px; margin: 8px 0 0 9px; }
.back-head .a { padding: 7px 12px; font-size: 22px; }
.back-row { display: flex; }
.back-row b { width: 46px; background: #161616; border-right: 2px solid #aaa; border-bottom: 2px solid #555; text-align: center; color: #e8e8e8; font-size: 20px; font-weight: 600; line-height: 32px; flex: none; }
.back-row i { flex: 1; border-bottom: 2px solid #c4c4c4; }
.back-pane { width: 700px; background: #f2f2f2; }
.pane-bar { display: flex; align-items: center; justify-content: flex-end; height: 54px; padding-right: 31px; background: #2a2a2a; }
.pane-close { width: 28px; height: 28px; border-radius: 50%; background: #7c7c7c; }
.back-card { height: 1158px; margin-right: 24px; background: #d0d0d0; border: 2px solid #8b95a0; border-radius: 0 0 14px 14px; }
.back-tabs { height: 52px; background: #323232; border-top: 2px solid #555; display: flex; align-items: center; gap: 34px; padding-left: 30px; flex: none; }
.back-tabs .sheet-on { width: 216px; height: 44px; margin: 6px 0 0 0; border-radius: 6px; background: #333; }
.back-tabs .arr { margin-top: 4px; }
</style>
